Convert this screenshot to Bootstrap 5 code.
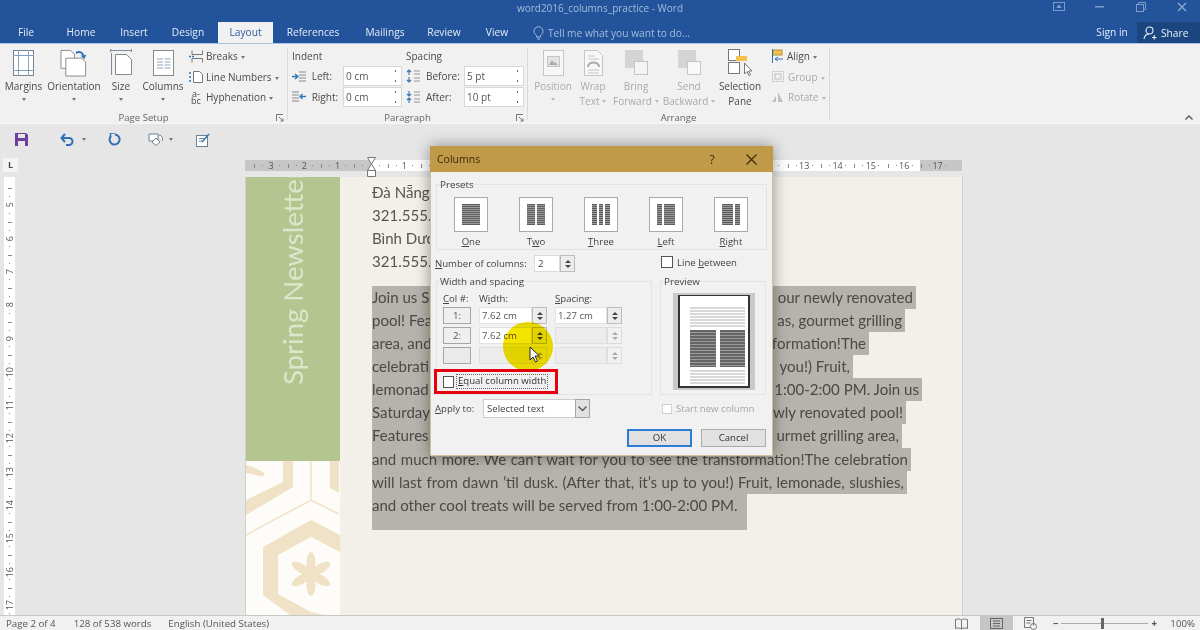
<!DOCTYPE html>
<html lang="en">
<head>
<meta charset="utf-8">
<title>word2016_columns_practice - Word</title>
<link href="https://cdn.jsdelivr.net/npm/bootstrap@5.3.0/dist/css/bootstrap.min.css" rel="stylesheet">
<style>
html,body{margin:0;height:630px;overflow:hidden}
body{width:1200px;background:#e6e6e6;font-family:"Open Sans","Liberation Sans",sans-serif;font-size:10px;line-height:14px;color:#4a4a4a}
svg{display:block;flex:none}
u{text-underline-offset:1px}
.wapp{width:1200px;height:630px;position:relative;overflow:hidden}
.wbar{height:44px;background:#23549b;border-bottom:1px solid #a9c4e4;color:#e9f0f8}
.wtop{height:22px;display:grid;grid-template-columns:1fr auto 1fr;align-items:start}
.wttl{color:#a4bcdc;font-size:10px;line-height:16px}
.wctl{margin-right:-2px}
.wctl span{width:41px;height:14px;display:flex;justify-content:center;align-items:center}
.wtabs{height:21px;font-size:10.2px}
.wtab{height:21px;line-height:20px;text-align:center;color:#e3ebf5}
.t1{width:52px}.t2{width:58px}.t3{width:48px}.t4{width:60px}.t5{width:55px}.t6{width:80px}.t7{width:64px}.t8{width:54px}.t9{width:52px}
.wtab.on{background:#f1f1f1;color:#2e5c9f}
.tell{margin-left:10px;color:#a4bcdc;gap:4px}
.sign{width:50px;text-align:center;margin-left:auto}
.shr{width:63px;height:21px;background:#1c4680;gap:4px;padding-left:6px}
.rib{height:80px;background:#f1f1f1;border-bottom:1px solid #f7f7f7}
.grp{border-right:1px solid #d9d9d9;height:72px;margin-top:4px}
.gin{height:63px}
.gname{height:14px;line-height:13px;text-align:center;color:#666;font-size:9.6px;position:relative}
.g1{width:288px}.g2{width:240px}.g3{width:302px}
.launch{position:absolute;right:3px;top:3px}
.bigb{display:flex;flex-direction:column;align-items:center;text-align:center;height:63px;line-height:14.5px}
.bico{height:29px;flex:none;display:flex;align-items:center;justify-content:center;margin-bottom:2px}
.dn{display:inline-block;width:0;height:0;border:2.5px solid transparent;border-top:3px solid #777;border-bottom:0;vertical-align:middle;margin-left:3px}
.dnb{margin:4px 0 0}
.dis{color:#a9a9a9}.dis .dn{border-top-color:#bbb}
.m1{width:47px}.m2{width:54px}.m3{width:40px}.m4{width:44px}
.p1{width:38px;margin-left:6px}.p2{width:42px}.p3{width:44px}.p4{width:62px}.p5{width:40px}
.smc{margin-top:-2px}
.smr{height:20.5px;gap:3px;white-space:nowrap}
.hyp{width:14px;font-size:9px;line-height:7px;text-align:center}
.pcol{padding-top:1px;padding-left:4px}
.pcw{width:114px}
.phd{height:16px;line-height:14px;margin-bottom:1px}
.prow{height:20.5px}
.rinp{background:#fff;border:1px solid #d8d8d8;height:20px;width:60px;padding-left:2px;line-height:18px;color:#555;position:relative}
.rinp::after{content:"";position:absolute;right:3px;top:3px;width:5px;height:12px;background:linear-gradient(#666,#666) 50% 0/1px 2px no-repeat,linear-gradient(#666,#666) 50% 100%/1px 2px no-repeat}
.pico{width:17px;margin-right:3px}
.plab1{width:32px}.plab2{width:38px}
.smarr{margin-left:11px}
.collapse-ic{position:absolute;left:1185px;top:115px}
.qat{height:31px;padding-left:15px}
.qg1{margin-left:32px}.qg2{margin-left:22px}.qg3{margin-left:27px}.qg4{margin-left:23px}
.rrow{height:22px}
.ltab{width:15px;height:14px;margin:3px 0 0 3px;background:#f4f4f4;font-size:9px;line-height:13px;text-align:center;font-weight:700}
.hrul{width:717px;height:11px;margin:5px 0 0 227px;display:flex;background:linear-gradient(90deg,#c6c6c6 126px,#fff 126px,#fff 675px,#c6c6c6 675px);font-size:9px;line-height:11px;color:#555;overflow:hidden}
.rcell{width:33.33px;flex:none;text-align:center;background:linear-gradient(#888,#888) 0 50%/1px 4px no-repeat,linear-gradient(#888,#888) 25% 50%/1px 1px no-repeat,linear-gradient(#888,#888) 75% 50%/1px 1px no-repeat}
.rf1{width:9.3px;flex:none}
.imark2{position:absolute;left:367px;top:157px}
.work{height:438px;position:relative}
.vrul{width:11px;height:438px;margin-left:4px;background:#fff;overflow:hidden;font-size:9px;color:#555;line-height:11px}
.vf{height:11.4px}
.vcell{height:33.33px;display:flex;align-items:center;justify-content:center;background:linear-gradient(#888,#888) 50% 0/4px 1px no-repeat,linear-gradient(#888,#888) 50% 25%/1px 1px no-repeat,linear-gradient(#888,#888) 50% 75%/1px 1px no-repeat}
.vcell span{writing-mode:vertical-rl;transform:rotate(180deg)}
.wpage{width:718px;margin-left:230px;background:#f2f0e9;border-left:1px solid #cfcfcb;border-right:1px solid #cfcfcb;height:438px}
.wside{width:94px;flex:none}
.wgrn{height:284px;background:#b4c590;overflow:hidden;color:#dde6cb;display:flex;justify-content:center}
.wgrn div{writing-mode:vertical-rl;transform:rotate(180deg);white-space:nowrap;font-family:Lato,"Open Sans",sans-serif;font-size:27.5px;line-height:30px;height:284px;padding-top:76px}
.wtxt{padding:4px 0 0 32px;font-family:Lato,"Open Sans",sans-serif;font-size:15.05px;line-height:23.15px;color:#56564f}
.sela{margin-top:12px;color:#4a4a44}
.sl{background:#b5b3ab;padding-right:3px;white-space:nowrap;height:23.15px;display:flex;justify-content:space-between}
.slj{display:block;text-align:justify;text-align-last:justify}
.l1{width:544px}.l2{width:533px}.l3{width:497px}.l4{width:481px}.l5{width:550px}.l6{width:534px}.l7{width:530px}.l8{width:539px}.l9{width:535px}.l10{width:375px;height:36px;text-align-last:left}
.stat{height:15px;background:#f1f1f1;border-top:1px solid #c8c8c8;font-size:9.7px;line-height:15px;padding-left:6px;color:#555}
.st2{margin-left:18px}.st3{margin-left:17px}
.sri{margin-left:auto;height:15px}
.pvw{width:33px;height:15px;background:#c6c6c6;margin:0 11px 0 12px;display:flex;align-items:center;justify-content:center}
.zbar{width:87px;height:1px;background:#aaa;position:relative;margin:0 3px}
.zth{position:absolute;left:40px;top:-5px;width:3px;height:11px;background:#666}
.zpc{width:43px;text-align:right;padding-right:5px}
/* dialog */
.cdlg{position:absolute;left:430px;top:146px;width:343px;height:310px;box-shadow:0 0 14px rgba(0,0,0,.4);font-size:9.6px;line-height:13px;color:#444;background:#f1f1f1}
.ctt{height:26px;background:#c09a48;color:#3a2c08;font-size:10.5px;padding-left:7px}
.cq{margin-left:auto;width:16px;text-align:center;font-size:12px}
.cx{margin:0 16px 0 26px}
.cbd{height:284px;border:1px solid #cfc19c;border-top:0;padding:12px 5px 0}
.cfs{border:1px solid #e3e3e3;position:relative}
.clg{width:fit-content;margin:-7px 0 0 2px;padding:0 1px;height:14px;line-height:13px;font-size:9.8px}
.fpre{height:66px}
.pitems{padding-left:1.500px;margin-top:5px}
.pit{width:65px;text-align:center}
.pbtn{width:34px;height:35px;margin:0 auto 3px;background:#fff;border:1px solid #a9a9a9;display:flex;gap:2px;padding:6px 7px}
.pc{background:repeating-linear-gradient(#5e5e5e 0 1px,#9a9a9a 1px 2px)}
.f1{flex:1}.fn{width:5px;flex:none}
.nrow{height:17px;margin-top:5px}
.nlab{width:99px;margin-left:-1px}
.nin{width:26px;height:17px;background:#fff;border:1px solid #dadada;padding-left:3px;line-height:15px}
.spn{width:15px;height:17px;border:1px solid #bcbcbc;background:#ececec;display:flex;flex-direction:column;align-items:center;justify-content:center;gap:2px;flex:none}
.spn i{display:block;width:0;height:0;border:3px solid transparent;border-top:0;border-bottom:3px solid #444}
.spn i+i{border-bottom:0;border-top:3px solid #444}
.spn.off{border-color:#dcdcdc;background:#f1f1f1}.spn.off i{border-bottom-color:#aaa}.spn.off i+i{border-top-color:#aaa}
.cchk{width:12px;height:12px;background:#fff;border:1px solid #555;flex:none}
.lbt{margin-left:86px;gap:4px;margin-top:-3px}
.frow{gap:8px;margin-top:9px}
.fwid{width:216px;height:114px}
.fprv{width:106px;height:114px}
.cgrid{display:grid;grid-template-columns:28px 68px 67px;column-gap:8px;row-gap:3px;padding-left:6px;margin-top:3px}
.chd{height:12px;line-height:14px}
.cnb{height:17px;border:1px solid #a6a6a6;background:#efefef;text-align:center;line-height:15px;color:#555}
.cnb.off{background:#eaeaea}
.cnf{display:flex}
.cin{flex:1;height:17px;background:#fff;border:1px solid #e2e2e2;padding-left:2px;line-height:15px;color:#555}
.cin.off{background:#ececec;border-color:#dfdfdf}
.redb{width:124px;height:25px;border:3px solid #e6000f;margin:5px 0 0 -3px;padding-left:6px;gap:2px}
.redb .cchk{width:11px}
.dotl{border:1px dotted #666;padding:0 1px;line-height:12px;height:15px;white-space:nowrap;color:#333}
.prvw{width:82px;height:97px;margin:4px 0 0 12px;background:#c9c9c9;display:flex;justify-content:center;padding-top:2px}
.ppr{width:72px;height:93px;background:#fff;border:2px solid #333;border-top-width:1px;padding:11px 3px 0 10px}
.gl{height:21px;margin-bottom:2px;background:repeating-linear-gradient(#d8d8d8 0 2px,#fff 2px 3px)}
.dkc{height:37px;display:flex;gap:4px;margin:0 0 3px}
.dkc div{flex:1;background:repeating-linear-gradient(#666 0 2px,#999 2px 3px)}
.gl2{height:15px;margin:0}
.arow{height:19px;margin-top:4px}
.alab{width:48px;margin-left:-1px}
.asel{width:92px;height:19px;background:#fff;border:1px solid #ccc;border-right:0;padding-left:3px;line-height:17px}
.acar{width:15px;height:19px;background:#e2e2e2;border:1px solid #a5a5a5;display:flex;align-items:center;justify-content:center}
.snc{margin-left:72px;gap:4px;color:#a6a6a6}
.snc .cchk{width:10px;height:10px;border-color:#d0d0d0}
.brow{gap:9px;margin-top:11px;padding-right:1px}
.wbtn{width:65px;height:18px;background:#e1e1e1;border:1px solid #adadad;text-align:center;line-height:16px;color:#333}
.wbtn.pri{border:2px solid #2b7cd3;line-height:14px}
.yhl{position:absolute;left:503px;top:322px;width:50px;height:49px;border-radius:50%;background:#f5e400;mix-blend-mode:multiply}
.curs{position:absolute;left:529px;top:346px}
</style>
</head>
<body>
<div class="wapp">
  <header class="wbar">
    <div class="wtop">
      <div></div>
      <div class="wttl">word2016_columns_practice - Word</div>
      <div class="wctl d-flex justify-content-end">
        <span><svg width="12" height="10" viewBox="0 0 12 10" fill="none" stroke="#7f9ccb"><rect x=".5" y=".5" width="11" height="8"/><path d="M4 5.5h4L6 3z" fill="#7f9ccb"/></svg></span>
        <span><svg width="9" height="2"><rect width="9" height="1.5" fill="#7f9ccb"/></svg></span>
        <span><svg width="10" height="10" viewBox="0 0 10 10" fill="none" stroke="#7f9ccb"><rect x=".5" y="2.5" width="7" height="7"/><path d="M2.5 2V.5h7v7H8"/></svg></span>
        <span><svg width="10" height="10" viewBox="0 0 10 10" stroke="#8faad2" stroke-width="1.3"><path d="M1 1l8 8M9 1l-8 8"/></svg></span>
      </div>
    </div>
    <nav class="wtabs d-flex align-items-start">
      <div class="wtab t1">File</div><div class="wtab t2">Home</div><div class="wtab t3">Insert</div><div class="wtab t4">Design</div><div class="wtab t5 on">Layout</div><div class="wtab t6">References</div><div class="wtab t7">Mailings</div><div class="wtab t8">Review</div><div class="wtab t9">View</div>
      <div class="tell d-flex align-items-center wtab">
        <svg width="11" height="14" viewBox="0 0 11 14" fill="none" stroke="#a4bcdc"><path d="M3.5 9.5C2 8.5 1 7 1 5.2a4.5 4.5 0 0 1 9 0c0 1.800-1 3.300-2.500 4.300V11h-4zM4 13h3"/></svg>
        <span>Tell me what you want to do...</span>
      </div>
      <div class="wtab sign">Sign in</div>
      <div class="shr d-flex align-items-center">
        <svg width="14" height="14" viewBox="0 0 14 14" fill="none" stroke="#e9f0f8" stroke-width="1.100"><circle cx="6.500" cy="4.500" r="3.500"/><path d="M1 13c.5-3 2.500-5 5-5M9 11.500h4.500M11.300 9v4.500"/></svg>
        <span>Share</span>
      </div>
    </nav>
  </header>

  <section class="rib d-flex">
    <div class="grp g1">
      <div class="gin d-flex">
        <div class="bigb m1"><div class="bico"><svg width="21" height="26" viewBox="0 0 21 26" fill="#fff" stroke="#75838f"><rect x=".5" y=".5" width="20" height="25"/><path d="M5.500 0v26M15.500 0v26" stroke="#8aa4bd"/><path d="M0 5.500h21M0 20.500h21" stroke="#7fa0c0"/></svg></div>Margins<span class="dn dnb"></span></div>
        <div class="bigb m2"><div class="bico"><svg width="28" height="28" viewBox="0 0 28 29" fill="#fff" stroke="#8a8a8a"><path d="M.5 1.500h10l4 4V20H.5z"/><path d="M5.500 9.500H22l4 4V28H5.500z"/><path d="M16 4c4-2 7-1 8 4" fill="none" stroke="#2f75b5" stroke-width="2"/><path d="M21 7l3.500 3.500L27 6z" fill="#2f75b5" stroke="none"/></svg></div>Orientation<span class="dn dnb"></span></div>
        <div class="bigb m3"><div class="bico"><svg width="22" height="27" viewBox="0 0 22 27" fill="#fff" stroke="#8a8a8a"><path d="M0 1.500h22M.5 0v3M21.500 0v3M1.500 4v22" stroke="#7d8f9f" fill="none"/><path d="M5.500 5.500h11l5 5v15h-16z"/></svg></div>Size<span class="dn dnb"></span></div>
        <div class="bigb m4"><div class="bico"><svg width="21" height="26" viewBox="0 0 21 26" fill="#fff" stroke="#8a8a8a"><rect x=".5" y=".5" width="20" height="25"/><path d="M4 9h6M11.500 9h6M4 12h6M11.500 12h6M4 15h6M11.500 15h6M4 18h6M11.500 18h6" stroke="#8fa6bd"/></svg></div>Columns<span class="dn dnb"></span></div>
        <div class="smc ms-1">
          <div class="smr d-flex align-items-center"><svg width="14" height="13" viewBox="0 0 14 13" fill="none" stroke="#777"><path d="M3 .5v4h10.500v-4M3 12.500v-4h10.500v4"/><path d="M0 6.500h5" stroke="#2f75b5" stroke-width="1.500" stroke-dasharray="2 1"/></svg><span>Breaks<span class="dn"></span></span></div>
          <div class="smr d-flex align-items-center"><svg width="14" height="14" viewBox="0 0 14 14" fill="#fff" stroke="#777"><path d="M4.500 1.500h6l3 3v8h-9z"/><path d="M1 2v2M1 6v2M1 10v2" stroke="#2f75b5" stroke-width="1.500"/></svg><span>Line Numbers<span class="dn"></span></span></div>
          <div class="smr d-flex align-items-center"><div class="hyp"><div>a-</div><div>bc</div></div><span>Hyphenation<span class="dn"></span></span></div>
        </div>
      </div>
      <div class="gname">Page Setup<svg class="launch" width="8" height="8" viewBox="0 0 8 8" fill="none" stroke="#777"><path d="M.5 7V.5H7M3 3l4 4M7 4.500V7H4.500"/></svg></div>
    </div>
    <div class="grp g2">
      <div class="gin d-flex">
        <div class="pcol pcw">
          <div class="phd">Indent</div>
          <div class="prow d-flex align-items-center"><div class="pico"><svg width="14" height="11" viewBox="0 0 14 11" fill="none"><path d="M7 1h7M7 4h7M7 7h7M7 10h7" stroke="#888"/><path d="M0 5.500h5M3 3l3 2.500L3 8" stroke="#2f75b5" stroke-width="1.300"/></svg></div><div class="plab1">Left:</div><div class="rinp">0 cm</div></div>
          <div class="prow d-flex align-items-center"><div class="pico"><svg width="14" height="11" viewBox="0 0 14 11" fill="none"><path d="M0 1h7M0 4h7M0 7h7M0 10h7" stroke="#888"/><path d="M8 5.500h6M10.500 3L8 5.500 10.500 8" stroke="#2f75b5" stroke-width="1.300"/></svg></div><div class="plab1">Right:</div><div class="rinp">0 cm</div></div>
        </div>
        <div class="pcol">
          <div class="phd">Spacing</div>
          <div class="prow d-flex align-items-center"><div class="pico"><svg width="14" height="14" viewBox="0 0 14 14" fill="none"><path d="M8 2h6M8 5h6M8 9h6M8 12h6" stroke="#999"/><path d="M3 1v5M1 3l2-2 2 2M3 8v5M1 11l2 2 2-2" stroke="#2f75b5" stroke-width="1.100"/></svg></div><div class="plab2">Before:</div><div class="rinp">5 pt</div></div>
          <div class="prow d-flex align-items-center"><div class="pico"><svg width="14" height="14" viewBox="0 0 14 14" fill="none"><path d="M8 2h6M8 5h6M8 9h6M8 12h6" stroke="#999"/><path d="M3 1v5M1 4l2 2 2-2M3 8v5M1 10l2-2 2 2" stroke="#2f75b5" stroke-width="1.100"/></svg></div><div class="plab2">After:</div><div class="rinp">10 pt</div></div>
        </div>
      </div>
      <div class="gname">Paragraph<svg class="launch" width="8" height="8" viewBox="0 0 8 8" fill="none" stroke="#777"><path d="M.5 7V.5H7M3 3l4 4M7 4.500V7H4.500"/></svg></div>
    </div>
    <div class="grp g3">
      <div class="gin d-flex">
        <div class="bigb p1 dis"><div class="bico"><svg width="21" height="26" viewBox="0 0 21 26" fill="#f7f7f7" stroke="#c5c5c5"><rect x=".5" y=".5" width="20" height="25"/><rect x="4.500" y="6.500" width="12" height="10" fill="#e4e4e4"/><path d="M6 15l3-5 2 3 1-1 3 3z" fill="#aaa" stroke="none"/></svg></div>Position<span class="dn dnb"></span></div>
        <div class="bigb p2 dis"><div class="bico"><svg width="19" height="26" viewBox="0 0 19 26" fill="#f7f7f7" stroke="#c5c5c5"><path d="M.5.5h13l5 5v20H.5z"/><path d="M4 6h7M4 9h11M4 20h11M4 23h11" /><path d="M4 17c0-6 11-6 11 0" fill="none" stroke="#aaa" stroke-width="2"/></svg></div>Wrap<div>Text<span class="dn"></span></div></div>
        <div class="bigb p3 dis"><div class="bico"><svg width="23" height="26" viewBox="0 0 23 26"><rect width="18" height="18" fill="#d4d4d4"/><rect x="9.500" y="11.500" width="13" height="13" fill="#f4f4f4" stroke="#c5c5c5"/></svg></div>Bring<div class="text-nowrap">Forward<span class="dn"></span></div></div>
        <div class="bigb p4 dis"><div class="bico"><svg width="23" height="26" viewBox="0 0 23 26"><rect width="18" height="18" fill="#d4d4d4"/><rect x="9.500" y="11.500" width="13" height="13" fill="#f8f8f8" stroke="#c5c5c5"/></svg></div>Send<div class="text-nowrap">Backward<span class="dn"></span></div></div>
        <div class="bigb p5"><div class="bico"><svg width="24" height="27" viewBox="0 0 24 27" fill="#fff" stroke="#777"><rect x=".5" y=".5" width="11" height="11"/><rect x=".5" y="13.500" width="11" height="11"/><rect x="8" y="7" width="11" height="5" fill="#f2c14e" stroke="none"/><path d="M16.500 14v11l2.500-2.500 2 4 1.500-.8-2-3.700h3.500z"/></svg></div>Selection<div>Pane</div></div>
        <div class="smc smarr">
          <div class="smr d-flex align-items-center"><svg width="13" height="14" viewBox="0 0 13 14" fill="none"><rect x="2" y="1" width="9" height="5" fill="#f2c14e" stroke="#b9913a"/><path d="M1.500 0v14" stroke="#2f75b5"/><path d="M4 10h8M4 10l3-2M4 10l3 2" stroke="#2f75b5"/></svg><span>Align<span class="dn"></span></span></div>
          <div class="smr d-flex align-items-center dis"><svg width="14" height="13" viewBox="0 0 14 13" fill="none" stroke="#c0c0c0"><rect x="1.500" y="1.500" width="11" height="10" stroke-dasharray="2 1"/><rect x="4" y="4" width="6" height="5"/></svg><span>Group<span class="dn"></span></span></div>
          <div class="smr d-flex align-items-center dis"><svg width="14" height="12" viewBox="0 0 14 12" fill="#c0c0c0"><path d="M7 1l5 10H7zM1 11l4-6v6z"/></svg><span>Rotate<span class="dn"></span></span></div>
        </div>
      </div>
      <div class="gname">Arrange</div>
    </div>
    <svg class="collapse-ic" width="8" height="5" viewBox="0 0 8 5" fill="none" stroke="#555" stroke-width="1.300"><path d="M.5 4.500L4 1l3.500 3.500"/></svg>
  </section>

  <section class="qat d-flex align-items-center">
    <svg width="13" height="13" viewBox="0 0 13 13"><path d="M0 0h11l2 2v11H0z" fill="#6e3f9c"/><rect x="3" y="1" width="7" height="4" fill="#e6e6e6"/><rect x="3" y="8" width="7" height="5" fill="#e6e6e6"/></svg>
    <svg class="qg1" width="14" height="13" viewBox="0 0 14 13" fill="none" stroke="#2f6fb5" stroke-width="2"><path d="M1.500 5H9a3.500 3.500 0 0 1 0 7H6"/><path d="M5 1L1.500 5 5 9"/></svg>
    <span class="dn ms-2"></span>
    <svg class="qg2" width="13" height="13" viewBox="0 0 13 13" fill="none" stroke="#2f6fb5" stroke-width="2"><path d="M3 3a5 5 0 1 0 4-1.500"/><path d="M7 0H2.500v4" stroke-width="1.500"/></svg>
    <svg class="qg3" width="17" height="13" viewBox="0 0 17 13" fill="#fff" stroke="#6f7f8f"><path d="M1 1h9v7H1z"/><path d="M11 2a4 4 0 0 1 3 6"/><path d="M8 5l4 4-4 3.500L4 9z" /></svg>
    <span class="dn ms-1"></span>
    <svg class="qg4" width="14" height="14" viewBox="0 0 14 14" fill="#fff" stroke="#6f7f8f"><rect x=".5" y="2.500" width="11" height="11"/><path d="M3 5.500h5M3 8h3" /><path d="M6 9l7-8" stroke="#2f75b5" stroke-width="1.500"/></svg>
  </section>

  <section class="rrow d-flex">
    <div class="ltab">L</div>
    <div class="hrul">
      <div class="rf1"></div>
      <div class="rcell">3</div><div class="rcell">2</div><div class="rcell">1</div><div class="rcell"></div>
      <div class="rcell">1</div><div class="rcell"></div><div class="rcell"></div><div class="rcell"></div><div class="rcell"></div><div class="rcell"></div><div class="rcell"></div><div class="rcell"></div><div class="rcell"></div><div class="rcell"></div><div class="rcell"></div><div class="rcell"></div><div class="rcell">13</div><div class="rcell">14</div><div class="rcell">15</div><div class="rcell">16</div><div class="rcell">17</div>
    </div>
    <svg class="imark2" width="9" height="20" viewBox="0 0 9 20" fill="#fff" stroke="#777"><path d="M.5.500h8L4.500 7zM4.500 7l4 6.500H.5zM.5 13.500h8v6h-8z"/></svg>
  </section>

  <main class="work d-flex">
    <div class="vrul">
      <div class="vf"></div>
      <div class="vcell"><span>5</span></div><div class="vcell"><span>6</span></div><div class="vcell"><span>7</span></div><div class="vcell"><span>8</span></div><div class="vcell"><span>9</span></div><div class="vcell"><span>10</span></div><div class="vcell"><span>11</span></div><div class="vcell"><span>12</span></div><div class="vcell"><span>13</span></div><div class="vcell"><span>14</span></div><div class="vcell"><span>15</span></div><div class="vcell"><span>16</span></div><div class="vcell"><span>17</span></div>
    </div>
    <div class="wpage d-flex">
      <div class="wside">
        <div class="wgrn"><div>Spring Newsletter</div></div>
        <svg width="94" height="154" viewBox="0 0 94 154">
          <rect width="94" height="154" fill="#fdfcf8"/>
          <g fill="#f0e2c6">
            <path d="M0 39L37 21V0H47V26L0 54z"/>
            <path d="M84 0H93V32L84 27z"/>
            <path d="M0 4c6 1 14 5 18 8 1 3-2 4-4 3C9 14 3 12 0 12z"/>
            <path d="M65 59L94 74V91L65 76 32 94V133L65 151 79 154H44L17 134V86z"/>
            <g transform="translate(65 113)"><ellipse cx="0" cy="-11" rx="4.500" ry="11"/><ellipse cx="0" cy="11" rx="4.500" ry="11"/><ellipse cx="0" cy="-11" rx="4.500" ry="11" transform="rotate(60)"/><ellipse cx="0" cy="-11" rx="4.500" ry="11" transform="rotate(120)"/><ellipse cx="0" cy="-11" rx="4.500" ry="11" transform="rotate(240)"/><ellipse cx="0" cy="-11" rx="4.500" ry="11" transform="rotate(300)"/></g>
          </g>
          <path d="M0 74L65 39 93 53M65 0V39" fill="none" stroke="#f0e2c6" stroke-width="1.500"/>
        </svg>
      </div>
      <article class="wtxt">
        <div>Đà Nẵng</div>
        <div>321.555.</div>
        <div>Bình Dươ</div>
        <div>321.555.</div>
        <div class="sela">
          <div class="sl l1"><span>Join us S</span><span>our newly renovated</span></div>
          <div class="sl l2"><span>pool! Fea</span><span>as, gourmet grilling</span></div>
          <div class="sl l3"><span>area, and</span><span>formation!The</span></div>
          <div class="sl l4"><span>celebrati</span><span>you!) Fruit,</span></div>
          <div class="sl l5"><span>lemonad</span><span>1:00-2:00 PM. Join us</span></div>
          <div class="sl l6"><span>Saturday</span><span>wly renovated pool!</span></div>
          <div class="sl l7"><span>Features</span><span>urmet grilling area,</span></div>
          <div class="sl slj l8">and much more. We can’t wait for you to see the transformation!The celebration</div>
          <div class="sl slj l9">will last from dawn ’til dusk. (After that, it’s up to you!) Fruit, lemonade, slushies,</div>
          <div class="sl slj l10">and other cool treats will be served from 1:00-2:00 PM.</div>
        </div>
      </article>
    </div>
  </main>

  <footer class="stat d-flex">
    <span>Page 2 of 4</span><span class="st2">128 of 538 words</span><span class="st3">English (United States)</span>
    <div class="sri d-flex align-items-center">
      <svg width="13" height="12" viewBox="0 0 13 12" fill="none" stroke="#777"><path d="M6.500 2C5 .8 2.500.8.500 1.500v9c2-.7 4.500-.7 6 .5 1.500-1.200 4-1.200 6-.5v-9C10.500.8 8 .8 6.500 2zM6.500 2v9"/></svg>
      <div class="pvw"><svg width="13" height="11" viewBox="0 0 13 11" fill="none" stroke="#666"><rect x=".5" y=".5" width="12" height="10"/><path d="M3 3h7M3 5.500h7M3 8h7"/></svg></div>
      <svg width="13" height="13" viewBox="0 0 13 13" fill="none" stroke="#777"><path d="M.5.500h9v8M.5.500v10h6M2.500 3.500h5M2.500 6h4"/><circle cx="9.500" cy="9.500" r="3"/></svg>
      <span class="ms-3 fw-bold">−</span>
      <div class="zbar"><div class="zth"></div></div>
      <span class="fw-bold">+</span>
      <span class="zpc">100%</span>
    </div>
  </footer>

  <!-- Columns dialog -->
  <div class="cdlg" role="dialog">
    <div class="ctt d-flex align-items-center">
      <span>Columns</span><span class="cq">?</span>
      <svg class="cx" width="11" height="11" viewBox="0 0 11 11" stroke="#3a2c08" stroke-width="1.200"><path d="M.5.500l10 10M10.500.500l-10 10"/></svg>
    </div>
    <div class="cbd">
      <div class="cfs fpre">
        <div class="clg">Presets</div>
        <div class="pitems d-flex">
          <div class="pit"><div class="pbtn"><div class="pc f1"></div></div><u>O</u>ne</div>
          <div class="pit"><div class="pbtn"><div class="pc f1"></div><div class="pc f1"></div></div>T<u>w</u>o</div>
          <div class="pit"><div class="pbtn"><div class="pc f1"></div><div class="pc f1"></div><div class="pc f1"></div></div><u>T</u>hree</div>
          <div class="pit"><div class="pbtn"><div class="pc fn"></div><div class="pc f1"></div></div><u>L</u>eft</div>
          <div class="pit"><div class="pbtn"><div class="pc f1"></div><div class="pc fn"></div></div><u>R</u>ight</div>
        </div>
      </div>
      <div class="nrow d-flex align-items-center">
        <span class="nlab"><u>N</u>umber of columns:</span>
        <div class="nin">2</div>
        <div class="spn"><i></i><i></i></div>
        <div class="lbt d-flex align-items-center"><div class="cchk"></div><span>Line <u>b</u>etween</span></div>
      </div>
      <div class="frow d-flex">
        <div class="cfs fwid">
          <div class="clg">Width and spacing</div>
          <div class="cgrid">
            <div class="chd"><u>C</u>ol #:</div><div class="chd">W<u>i</u>dth:</div><div class="chd"><u>S</u>pacing:</div>
            <div class="cnb">1:</div><div class="cnf"><div class="cin">7.62 cm</div><div class="spn"><i></i><i></i></div></div><div class="cnf"><div class="cin">1.27 cm</div><div class="spn"><i></i><i></i></div></div>
            <div class="cnb">2:</div><div class="cnf"><div class="cin">7.62 cm</div><div class="spn"><i></i><i></i></div></div><div class="cnf"><div class="cin off"></div><div class="spn off"><i></i><i></i></div></div>
            <div class="cnb off"></div><div class="cnf"><div class="cin off"></div><div class="spn off"><i></i><i></i></div></div><div class="cnf"><div class="cin off"></div><div class="spn off"><i></i><i></i></div></div>
          </div>
          <div class="redb d-flex align-items-center"><div class="cchk"></div><span class="dotl"><u>E</u>qual column width</span></div>
        </div>
        <div class="cfs fprv">
          <div class="clg">Preview</div>
          <div class="prvw"><div class="ppr"><div class="gl"></div><div class="dkc"><div></div><div></div></div><div class="gl gl2"></div></div></div>
        </div>
      </div>
      <div class="arow d-flex align-items-center">
        <span class="alab"><u>A</u>pply to:</span>
        <div class="asel">Selected text</div>
        <div class="acar"><svg width="9" height="6" viewBox="0 0 9 6" fill="none" stroke="#555" stroke-width="1.300"><path d="M.5.500l4 4 4-4"/></svg></div>
        <div class="snc d-flex align-items-center"><div class="cchk"></div><span>Start new column</span></div>
      </div>
      <div class="brow d-flex justify-content-end">
        <div class="wbtn pri">OK</div><div class="wbtn">Cancel</div>
      </div>
    </div>
  </div>
  <div class="yhl"></div>
  <svg class="curs" width="12" height="17" viewBox="0 0 12 17" fill="#fff" stroke="#222"><path d="M1 1v13l3-3 2.500 5 2-1-2.500-5h4.500z"/></svg>
</div>
<script src="https://cdn.jsdelivr.net/npm/bootstrap@5.3.0/dist/js/bootstrap.bundle.min.js"></script>
</body>
</html>
